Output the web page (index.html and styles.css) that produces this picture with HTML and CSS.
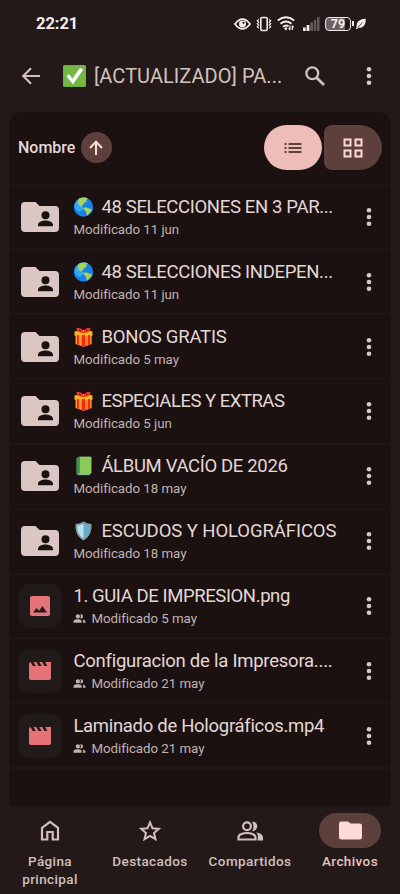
FILE: index.html
```html
<!DOCTYPE html>
<html lang="es">
<head>
<meta charset="utf-8">
<meta name="viewport" content="width=device-width, initial-scale=1">
<title>Archivos</title>
<link rel="stylesheet" href="styles.css">
</head>
<body>
<svg class="defs" aria-hidden="true">
  <defs>
    <symbol id="more" viewBox="0 0 8 20"><circle cx="4" cy="3.3" r="2.3"/><circle cx="4" cy="10" r="2.3"/><circle cx="4" cy="16.7" r="2.3"/></symbol>
    <symbol id="folder" viewBox="0 0 38 32"><path fill-rule="evenodd" d="M4 1h10.500l4 4H34q4 0 4 4v18q0 4-4 4H4q-4 0-4-4V5q0-4 4-4ZM24.500 10.300a4 4 0 1 0 0 8 4 4 0 1 0 0-8ZM17 25.300h15v-1.600c0-3-5-4.200-7.500-4.200S17 20.700 17 23.700Z"/></symbol>
    <symbol id="people" viewBox="0 2 24 20"><path d="M9 12a4 4 0 1 0 0-8 4 4 0 0 0 0 8Zm5.500 0a4 4 0 0 0 0-8q-.7 0-1.200.2a6 6 0 0 1 0 7.600q.5.200 1.200.2ZM1 20h15v-2.700C16 14.500 11.500 13.500 8.500 13.500S1 14.500 1 17.300Zm17 0h5v-2.700c0-2-2.500-3.200-5.500-3.600q1.500 1.300 1.500 3.600Z"/></symbol>
    <symbol id="video" viewBox="0 0 24 20"><path d="M2.500 1l2.300 4h3L5.500 1h2.800l2.300 4h3l-2.300-4h2.800l2.300 4h3l-2.300-4H23v16q0 2-2 2H3q-2 0-2-2V3q0-1.500 1.500-2Z"/></symbol>
    <symbol id="globe" viewBox="0 0 20 20"><circle cx="10" cy="10" r="9.700" fill="#1682e4"/><path d="M1 9Q2 2.500 9 1L8 8l2 4-4 3Q1.500 13 1 9Z" fill="#32a9f7"/><path d="M5 2Q8 .3 12 .6l2.500 1L12.500 3l1 1.500-2.500 1.300L9.500 8l-1.800.7.800 1.600L10.500 11l2-.8 3 1.300 3 .6-1 2.700-2 1.600-1.200 2-1.300-.8-.5-3-2-1.800L10 11.500 6.500 9 4.500 6.500Z" fill="#a6d35d"/></symbol>
    <symbol id="gift" viewBox="0 0 20 20"><path d="M2 7l8 1.500L18 7v10l-8 2.800L2 17Z" fill="#fa9d19"/><path d="M10 8.500L18 7v10l-8 2.800Z" fill="#f08517"/><path d="M1 4.500L10 3l9 1.500v4L10 10 1 8.500Z" fill="#ffb324"/><path d="M8.300 8h3.400v11.500h-3.400ZM3.500 8h2v10l-2-.6Zm11 0h2v9.400l-2 .6Z" fill="#e82b24"/><path d="M10 5C8 0 4 0 3 1.500S5 6 10 6Zm0 0c2-5 6-5 7-3.500S15 6 10 6Z" fill="#f03127"/><path d="M5 2.500q2-.4 3 2Q5 4 5 2.500Zm10 0q-2-.4-3 2 3-.5 3-2Z" fill="#9d1715"/></symbol>
    <symbol id="book" viewBox="0 0 20 20"><path d="M3 2.500L5 .7h12v17l-1.500 1.600H4q-1.500-.5-1-2Z" fill="#397d4c"/><path d="M4 17.400h12.500v1.200H5Z" fill="#e4eee0"/><path d="M6 .7h12v16.800H6Z" fill="#8acb59"/><path d="M3 2.200L5 .7h1v16.800H4L3 18Z" fill="#468b55"/></symbol>
    <symbol id="shield" viewBox="0 0 20 20"><path d="M10 .5q3.500 2.300 8 2.500c.5 8-2.500 13.500-8 16.500C4.500 16.500 1.500 11 2 3q4.500-.2 8-2.500Z" fill="#829ba7"/><path d="M10 2.700q3 1.600 6.300 1.900c0 6-2 10.500-6.300 13Z" fill="#64aed0"/><path d="M10 2.700v14.900C5.700 15 3.700 10.500 3.700 4.600Q7 4.300 10 2.700Z" fill="#b9e2ed"/></symbol>
  </defs>
</svg>
<div class="screen">
  <div class="status">
    <span class="clock">22:21</span>
    <div class="status-icons">
      <svg class="st-eye" viewBox="0 0 18 14"><path d="M1 7q8-10.500 16 0-8 10.500-16 0Z" fill="none" stroke="currentColor" stroke-width="1.800"/><circle cx="9" cy="7" r="3.700" fill="currentColor"/><circle cx="10" cy="5.800" r="1.100" fill="#231919"/></svg>
      <svg class="st-vib" viewBox="0 0 16 16" fill="none" stroke="currentColor"><rect x="4.800" y="1.500" width="6.400" height="13" rx="1.300" stroke-width="1.600"/><path d="M2.800 3.500l-1.500 1.300 1.500 1.500-1.500 1.500 1.500 1.500-1.500 1.500 1.500 1.500M13.200 3.500l1.500 1.300-1.500 1.500 1.500 1.500-1.500 1.500 1.500 1.500-1.500 1.500" stroke-width="1.200"/></svg>
      <svg class="st-wifi" viewBox="0 0 18 15" fill="none" stroke="currentColor" stroke-width="1.900"><path d="M.8 4.500Q9-1.800 17.200 4.500M3.500 7.700q5.500-4.200 11 0M6 10.700q3-2.300 5.500-.5"/><path d="M7 12.500l2-1.500 1.500 1.500L9 14.500Z" fill="currentColor" stroke="none"/><path d="M12.900 9.500v4.500M15.300 9.500v4.500M11.700 12l1.200 2M16.500 11.500l-1.200-2" stroke-width="1.200"/></svg>
      <svg class="st-signal" viewBox="0 0 17 14" fill="currentColor"><path d="M0 10.500h2.800V14H0ZM3.600 8h2.800v6H3.600Z"/><path opacity=".3" d="M7.200 5.500H10V14H7.200ZM10.700 3h2.500v11h-2.500ZM14 0h2.500v14H14Z"/></svg>
      <span class="battery"><span>79</span></span>
      <svg class="st-leaf" viewBox="0 0 10 12"><path d="M9.700.8C4 1 .5 3.500.7 8L0 11h1.200l.8-1.200C8 10.500 10 6 9.700.8Z" fill="currentColor"/><path d="M2 9.300L6.500 4.500" stroke="#231919" stroke-width=".8"/></svg>
    </div>
  </div>

  <header class="topbar">
    <svg class="back" viewBox="0 0 18 18" fill="none" stroke="currentColor" stroke-width="2.200"><path d="M18 9H1.500M9 1.300L1.300 9 9 16.700"/></svg>
    <svg class="check" viewBox="0 0 23 22"><rect width="23" height="22" rx="1.500" fill="#6cae3d"/><rect x=".7" y=".7" width="21.600" height="20" rx="1" fill="#74b843"/><path d="M4 11.300L6 9.700l3.400 4.700 7.700-11 2.500 1.300-9.600 14Z" fill="#fff" stroke="#fff" stroke-linejoin="round"/></svg>
    <h1 class="page-title">[ACTUALIZADO] PA...</h1>
    <svg class="search" viewBox="0 0 20 20" fill="none" stroke="currentColor"><circle cx="7.300" cy="7.300" r="5.900" stroke-width="2.300"/><path d="M11.700 11.700L19 19" stroke-width="2.700"/></svg>
    <svg class="more"><use href="#more"/></svg>
  </header>

  <main class="list">
    <div class="list-head">
      <span class="sort">Nombre</span>
      <span class="sort-dir"><svg viewBox="0 0 14 16" fill="none" stroke="currentColor" stroke-width="2"><path d="M7 15V2M1 8l6-6.300L13 8"/></svg></span>
      <div class="views">
        <span class="view view-list"><svg viewBox="0 0 18 12" fill="currentColor"><path d="M.5 1h2v2h-2ZM4.500 1H17.500v2h-13ZM.5 5h2v2h-2ZM4.500 5H17.500v2h-13ZM.5 9h2v2h-2ZM4.500 9H17.500v2h-13Z"/></svg></span>
        <span class="view view-grid"><svg viewBox="0 0 20 20" fill="none" stroke="currentColor" stroke-width="2"><path d="M1.500 1.500h6v6h-6ZM12.500 1.500h6v6h-6ZM1.500 12.500h6v6h-6ZM12.500 12.500h6v6h-6Z"/></svg></span>
      </div>
    </div>

    <div class="row"><svg class="folder"><use href="#folder"/></svg><div class="info"><div class="name"><svg class="emoji"><use href="#globe"/></svg><span class="n1">48 SELECCIONES EN 3 PAR...</span></div><div class="meta">Modificado 11 jun</div></div><svg class="more"><use href="#more"/></svg></div>
    <div class="row"><svg class="folder"><use href="#folder"/></svg><div class="info"><div class="name"><svg class="emoji"><use href="#globe"/></svg><span class="n2">48 SELECCIONES INDEPEN...</span></div><div class="meta">Modificado 11 jun</div></div><svg class="more"><use href="#more"/></svg></div>
    <div class="row"><svg class="folder"><use href="#folder"/></svg><div class="info"><div class="name"><svg class="emoji"><use href="#gift"/></svg><span class="n3">BONOS GRATIS</span></div><div class="meta">Modificado 5 may</div></div><svg class="more"><use href="#more"/></svg></div>
    <div class="row"><svg class="folder"><use href="#folder"/></svg><div class="info"><div class="name"><svg class="emoji"><use href="#gift"/></svg><span class="n4">ESPECIALES Y EXTRAS</span></div><div class="meta">Modificado 5 jun</div></div><svg class="more"><use href="#more"/></svg></div>
    <div class="row"><svg class="folder"><use href="#folder"/></svg><div class="info"><div class="name"><svg class="emoji"><use href="#book"/></svg><span class="n5">ÁLBUM VACÍO DE 2026</span></div><div class="meta">Modificado 18 may</div></div><svg class="more"><use href="#more"/></svg></div>
    <div class="row"><svg class="folder"><use href="#folder"/></svg><div class="info"><div class="name"><svg class="emoji"><use href="#shield"/></svg><span class="n6">ESCUDOS Y HOLOGRÁFICOS</span></div><div class="meta">Modificado 18 may</div></div><svg class="more"><use href="#more"/></svg></div>
    <div class="row"><span class="thumb"><svg class="image" viewBox="0 0 20 20"><rect width="20" height="20" rx="2" fill="currentColor"/><path d="M3 16.500l3.500-4.500 2.500 2.800L12.500 10l4.500 6.500Z" fill="#231c1a"/></svg></span><div class="info"><div class="name"><span class="n7">1. GUIA DE IMPRESION.png</span></div><div class="meta"><svg class="people"><use href="#people"/></svg>Modificado 5 may</div></div><svg class="more"><use href="#more"/></svg></div>
    <div class="row"><span class="thumb"><svg class="video"><use href="#video"/></svg></span><div class="info"><div class="name"><span class="n8">Configuracion de la Impresora....</span></div><div class="meta"><svg class="people"><use href="#people"/></svg>Modificado 21 may</div></div><svg class="more"><use href="#more"/></svg></div>
    <div class="row"><span class="thumb"><svg class="video"><use href="#video"/></svg></span><div class="info"><div class="name"><span class="n9">Laminado de Holográficos.mp4</span></div><div class="meta"><svg class="people"><use href="#people"/></svg>Modificado 21 may</div></div><svg class="more"><use href="#more"/></svg></div>
    <div class="list-end"></div>
  </main>

  <nav class="nav">
    <a class="tab"><span class="pill"><svg class="home" viewBox="0 0 20 21" fill="none" stroke="currentColor" stroke-width="2.200"><path d="M2 7.800L10 1.800l8 6V19.500h-5.300V12H7.300v7.500H2Z"/></svg></span><span>Página<br>principal</span></a>
    <a class="tab"><span class="pill"><svg class="star" viewBox="0 0 22 21" fill="none" stroke="currentColor" stroke-width="2"><path d="M11 2.400l2.500 5.900 6.300.5-4.800 4.200 1.500 6.200-5.500-3.300-5.500 3.300L7 13 2.200 8.800l6.300-.5Z"/></svg></span><span>Destacados</span></a>
    <a class="tab"><span class="pill"><svg class="shared" viewBox="0 0 26 20" fill="none" stroke="currentColor" stroke-width="2.200"><circle cx="10" cy="5.300" r="3.900"/><path d="M1.500 18.500h17v-2.200c0-2.800-5-4.300-8.500-4.300s-8.500 1.500-8.500 4.300Z"/><path d="M15 .7c6-1 8 8.500 0 9.600q3-4.800 0-9.600ZM20.300 19.600h5.700v-3c0-2.800-3-4.500-6.800-5 2 2 2 5 1.100 8Z" fill="currentColor" stroke="none"/></svg></span><span>Compartidos</span></a>
    <a class="tab active"><span class="pill"><svg class="files" viewBox="0 0 24 19"><path d="M2.500 0h7l2.500 2.300h9.500q2.500 0 2.500 2.400v11.800Q24 19 21.500 19h-19Q0 19 0 16.500v-14Q0 0 2.500 0Z" fill="currentColor"/></svg></span><span>Archivos</span></a>
  </nav>
</div>
</body>
</html>
```

FILE: styles.css
```css
* { box-sizing: border-box; }
body {
  margin: 0;
  background: #231919;
  color: #e4d8d5;
  font-family: Roboto, "Liberation Sans", sans-serif;
}
svg { display: block; flex: none; }
.defs { position: absolute; width: 0; height: 0; }
.screen {
  width: 400px;
  height: 894px;
  display: flex;
  flex-direction: column;
  overflow: hidden;
}

.status {
  height: 46px;
  display: flex;
  justify-content: space-between;
  padding: 1px 34px 0 36px;
  align-items: center;
  color: #f5eeec;
}
.clock { font: 700 16.500px/20px Roboto, sans-serif; letter-spacing: -.05px; }
.status-icons { display: flex; align-items: center; }
.st-eye { width: 17px; height: 14px; }
.st-vib { width: 16px; height: 16px; margin-left: 5px; }
.st-wifi { width: 18px; height: 15px; margin-left: 5px; }
.st-signal { width: 17px; height: 14px; margin-left: 8px; }
.battery {
  position: relative;
  width: 26px;
  height: 14px;
  margin: 0 3px 0 5px;
  border: 1.500px solid #eee7e5;
  border-radius: 4px;
  background: linear-gradient(90deg, #6b6261 79%, #231919 79%);
  font: 700 12.500px/12px Roboto, sans-serif;
  text-align: center;
}
.battery::after {
  content: "";
  position: absolute;
  right: -4px;
  top: 3px;
  width: 2px;
  height: 5px;
  background: #eee7e5;
}
.st-leaf { width: 10px; height: 12px; margin-left: 2px; }

.topbar {
  height: 66px;
  padding: 0 27px 7px 22px;
  display: flex;
  align-items: center;
  color: #d2c2bf;
}
.back { width: 18px; height: 18px; }
.check { width: 23px; height: 22px; margin-left: 23px; }
.page-title {
  width: 211px;
  margin: 0 0 0 8px;
  font-size: 20px;
  line-height: 26px;
  font-weight: 400;
  letter-spacing: .05px;
  white-space: nowrap;
}
.search { width: 20px; height: 20px; }
.topbar .search { margin-right: auto; }
.more { width: 8px; height: 20px; fill: #d5cbc8; }

.list {
  margin: 0 9px;
  height: 694px;
  display: flex;
  flex-direction: column;
  gap: 2px;
  border-radius: 14px 14px 0 0;
  overflow: hidden;
  background: #201616;
}
.list-head {
  height: 71.500px;
  flex: none;
  display: flex;
  align-items: center;
  padding: 0 9px;
  background: #1b1111;
  border-radius: 14px 14px 3px 3px;
}
.sort { width: 62.500px; font-size: 16px; font-weight: 500; white-space: nowrap; }
.sort-dir {
  width: 31px;
  height: 31px;
  border-radius: 50%;
  background: #5d3f3c;
  color: #ffdad6;
  display: grid;
  place-items: center;
}
.sort-dir svg { width: 14px; height: 16px; }
.views { display: flex; gap: 2px; margin-left: auto; }
.view { width: 58px; height: 45px; display: grid; place-items: center; }
.view-list { background: #efbdb7; color: #5d3f3c; border-radius: 22.500px; }
.view-grid { background: #5d3f3c; color: #ffdad6; border-radius: 8px 22.500px 22.500px 8px; }
.view-list svg { width: 18px; height: 12px; }
.view-grid svg { width: 20px; height: 20px; }

.row {
  height: 62.850px;
  flex: none;
  display: flex;
  align-items: center;
  padding: 0 18.500px 0 12px;
  background: #1b1111;
  border-radius: 3px;
}
.folder { width: 38px; height: 32px; fill: #dac6c2; }
.thumb {
  width: 44px;
  height: 44px;
  margin: 0 -3px;
  flex: none;
  border-radius: 12px;
  background: #201b18;
  color: #e57378;
  display: grid;
  place-items: center;
}
.image { width: 20px; height: 20px; }
.video { width: 24px; height: 20px; fill: currentColor; }
.info { flex: 1; margin-left: 14.400px; padding-top: 1px; min-width: 0; }
.name {
  height: 24px;
  display: flex;
  align-items: center;
  gap: 7px;
  font-size: 18.500px;
  line-height: 24px;
  white-space: nowrap;
}
.n1 { letter-spacing: -.34px; }
.n2 { letter-spacing: -.32px; }
.n3 { letter-spacing: -.22px; }
.n4 { letter-spacing: -.49px; }
.n5 { letter-spacing: -.34px; }
.n6 { letter-spacing: -.08px; }
.n7 { letter-spacing: -.4px; }
.n8 { letter-spacing: -.24px; }
.n9 { letter-spacing: -.3px; }
.emoji { width: 21px; height: 20px; }
.meta {
  height: 20px;
  margin-top: 1px;
  display: flex;
  align-items: center;
  font-size: 13.300px;
  line-height: 20px;
  letter-spacing: -.04px;
  color: #c0b3b0;
  white-space: nowrap;
}
.people { width: 13px; height: 11px; margin-right: 5px; fill: currentColor; }
.list-end { flex: 1; background: #1b1111; border-radius: 3px 3px 0 0; }

.nav { height: 88px; display: flex; }
.tab {
  width: 100px;
  padding-top: 7px;
  display: flex;
  flex-direction: column;
  align-items: center;
  gap: 4px;
  text-align: center;
  font-size: 13.500px;
  line-height: 18px;
  font-weight: 500;
  letter-spacing: .4px;
  color: #d2c0bd;
}
.pill { width: 62px; height: 35px; border-radius: 18px; display: grid; place-items: center; }
.active { color: #e5c5c0; }
.active .pill { background: #5d3f3c; color: #ffdad6; }
.home { width: 20px; height: 21px; }
.star { width: 22px; height: 21px; }
.shared { width: 26px; height: 20px; }
.files { width: 23px; height: 19px; }
```
